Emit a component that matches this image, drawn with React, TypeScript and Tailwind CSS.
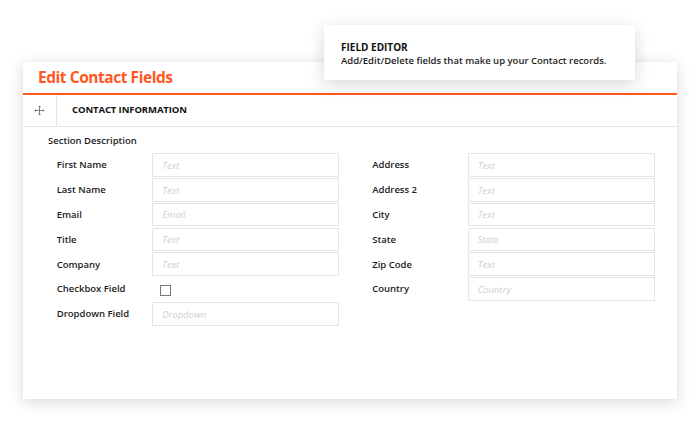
import React from "react";

const left = [
  ["First Name", "Text"],
  ["Last Name", "Text"],
  ["Email", "Email"],
  ["Title", "Text"],
  ["Company", "Text"],
  ["Checkbox Field", null],
  ["Dropdown Field", "Dropdown"],
];
const right = [
  ["Address", "Text"],
  ["Address 2", "Text"],
  ["City", "Text"],
  ["State", "State"],
  ["Zip Code", "Text"],
  ["Country", "Country"],
];

function Row({ label, ph }: { label: string; ph: string | null }) {
  return (
    <div className="flex items-center h-[23.6px]">
      <div className="w-[95.5px] shrink-0 text-[9.5px] font-semibold text-[#1c1c1c] pt-[1px]">{label}</div>
      {ph === null ? (
        <div className="w-[187px] h-full flex items-center pl-[8px] pt-[4px]">
          <div className="w-[11px] h-[11px] border-[1.5px] border-[#777]" />
        </div>
      ) : (
        <div className="w-[187px] h-full border border-[#e6e6e6] flex items-center pl-[9px] pt-[2px] text-[9.5px] italic text-[#cfcfcf]">
          {ph}
        </div>
      )}
    </div>
  );
}

export default function App() {
  return (
    <div className="relative w-[700px] h-[436px] bg-white overflow-hidden" style={{ fontFamily: '"Open Sans", sans-serif' }}>
      <div className="pt-[62px] pl-[23px]">
        <div className="w-[654px] h-[337px] bg-white shadow-[0_3px_14px_rgba(0,0,0,0.16)] flex flex-col">
          <div className="h-[33px] border-b-2 border-[#ff5722] flex items-center pl-[15px]">
            <span className="text-[15.5px] font-bold text-[#ff5722] leading-none tracking-[-0.45px]">Edit Contact Fields</span>
          </div>
          <div className="h-[32px] border-b border-[#e6e6e6] flex">
            <div className="w-[34px] border-r border-[#e6e6e6] flex items-center justify-center">
              <svg width="11" height="11" viewBox="0 0 12 12" fill="none" stroke="#777" strokeWidth="1">
                <path d="M6 1v10M1 6h10" />
                <path d="M4.8 2.3L6 1l1.2 1.3M4.8 9.7L6 11l1.2-1.3M2.3 4.8L1 6l1.3 1.2M9.7 4.8L11 6l-1.3 1.2" />
              </svg>
            </div>
            <div className="flex items-center pl-[15px] text-[9.5px] font-bold text-[#111] tracking-[-0.1px]">CONTACT INFORMATION</div>
          </div>
          <div className="pl-[25px] pt-[7px] text-[9.5px] font-semibold text-[#1c1c1c]">Section Description</div>
          <div className="flex pl-[33.7px] pt-[5px] gap-[33px]">
            <div className="flex flex-col gap-[1.2px]">
              {left.map(([l, p]) => (
                <Row key={l} label={l as string} ph={p} />
              ))}
            </div>
            <div className="flex flex-col gap-[1.2px]">
              {right.map(([l, p]) => (
                <Row key={l} label={l as string} ph={p} />
              ))}
            </div>
          </div>
        </div>
      </div>
      <div className="absolute left-[324px] top-[25px] w-[311px] h-[55px] bg-white shadow-[0_4px_16px_rgba(0,0,0,0.16)] pl-[17px] pt-[15px]">
        <div className="text-[10px] font-bold text-[#111] leading-[14px]">FIELD EDITOR</div>
        <div className="text-[9.5px] font-semibold text-[#1c1c1c] leading-[14px]">Add/Edit/Delete fields that make up your Contact records.</div>
      </div>
    </div>
  );
}
